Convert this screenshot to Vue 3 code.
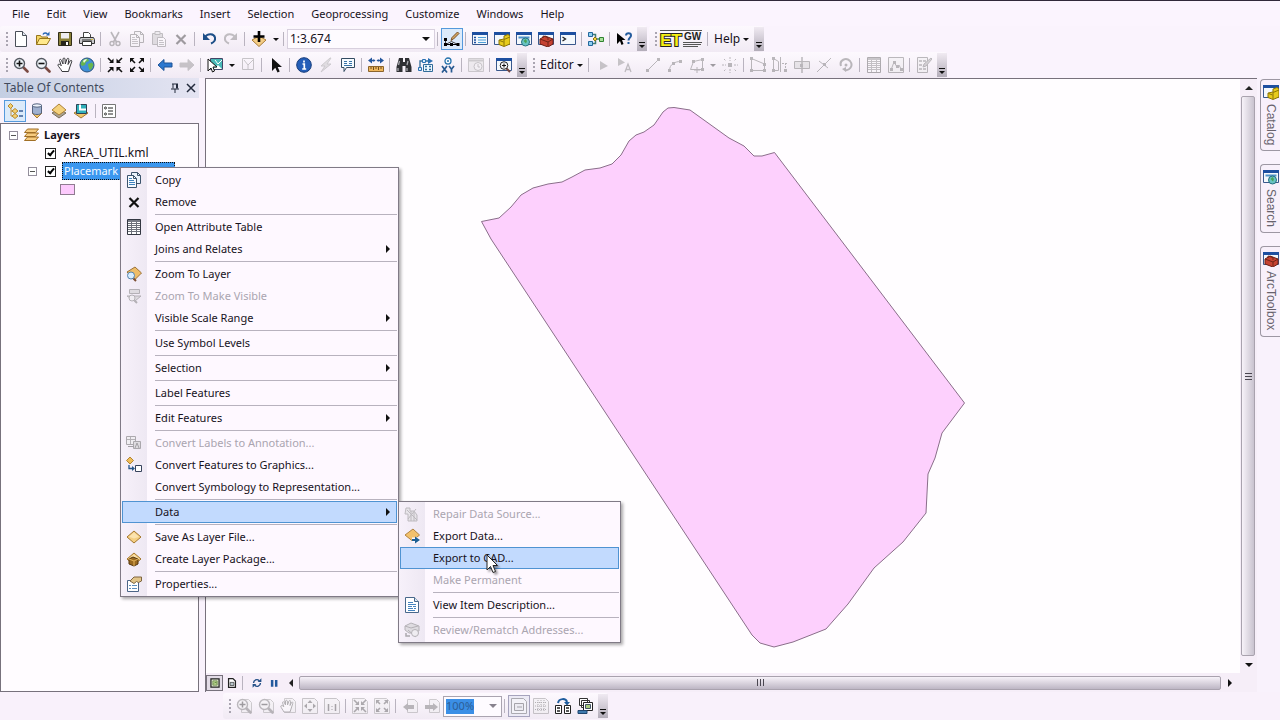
<script setup>
import { ref } from 'vue'

const page = '<path d="M2.500.5h7l4 4v11h-11z" fill="#fff" stroke="#4a4f58"/><path d="M9.500.5v4h4" fill="#dfe6ee" stroke="#4a4f58"/>'
const win = '<path d="M.5 1.500h15v12H.5z" fill="#f4f8fc" stroke="#39588c"/><path d="M0 1h16v3H0z" fill="#1d4fa0"/>'
const lens = '<path d="M10 10l4.500 4.500" stroke="#7b4a42" stroke-width="2.600" stroke-linecap="round"/><circle cx="6.500" cy="6.500" r="5" fill="#eef3f8" stroke="#555a62" stroke-width="1.400"/>'
const diamond = '<path d="M8 2l7 6-7 6-7-6z" fill="#f4cf83" stroke="#a5772e"/><path d="M8 3.500l5 4.300-5 1.700-5-1.700z" fill="#fbe3ae"/>'
const pageLens = '<path d="M5.500 1.500h7l3 3v10h-10z" fill="#eee" stroke="#888"/>'
const nodes = (pts) => pts.map(([x, y]) => `<path d="M${x - 1} ${y - 1}h3v3h-3z" fill="#555"/>`).join('')

const icons = {
  new: page,
  open: '<path d="M1.500 13.500v-9h4l1 1.500h6v2" fill="#f5d565" stroke="#96751c"/><path d="M1.500 13.500l3-6h11l-3.500 6z" fill="#ffe98c" stroke="#96751c"/><path d="M8 3.500c1-2 3-2 4.500-.5" fill="none" stroke="#2767b5" stroke-width="1.500"/><path d="M11 4.500h3.500v-4z" fill="#2767b5"/>',
  save: '<path d="M1.500 1.500h13v13h-13z" fill="#8a8038" stroke="#302d18"/><path d="M4 2h8v5.500H4z" fill="#efeef2"/><path d="M4 10h8v4.500H4z" fill="#25241c"/><path d="M9 11h2v3H9z" fill="#fff"/>',
  print: '<path d="M4.500 7V1.500h5l2 2V7" fill="#fff" stroke="#444"/><path d="M1.500 6.500h13l1 2v4h-15v-4z" fill="#c9c9cc" stroke="#333"/><path d="M3 9h10" stroke="#333"/><path d="M3.500 10.500h9v4h-9z" fill="#fff" stroke="#333"/><path d="M12 8h2v1h-2z" fill="#d4bd3a"/>',
  cut: '<path d="M4 1l5.500 10M12 1L6.500 11" stroke="#555" stroke-width="1.600"/><circle cx="5" cy="12.500" r="2" fill="none" stroke="#555" stroke-width="1.400"/><circle cx="11" cy="12.500" r="2" fill="none" stroke="#555" stroke-width="1.400"/>',
  copy: '<path d="M5.500.5h6l3 3v8h-9z" fill="#eaf2fb" stroke="#3c536c"/><path d="M1.500 3.500h6l3 3v9h-9z" fill="#f6faff" stroke="#3c536c"/><path d="M7.500 3.500v3h3M11.500.5v3h3" fill="none" stroke="#3c536c"/><path d="M3 8.500h5M3 10.500h6M3 12.500h6M3 6.500h3" stroke="#3f83bd"/>',
  paste: '<path d="M1.500 2.500h10v11h-10z" fill="#bbb" stroke="#666"/><path d="M4 .5h5v3H4z" fill="#ddd" stroke="#666"/><path d="M6.500 6.500h6l2 2v7h-8z" fill="#fff" stroke="#666"/><path d="M8 9.500h4M8 11.500h5M8 13.500h5" stroke="#777"/>',
  x: '<path d="M3.500 4l9 9M12.500 4l-9 9" stroke="#111" stroke-width="2.200"/>',
  undo: '<path d="M4 6c3-4 9-3.500 10 .5.500 3-1.500 5-4 6" fill="none" stroke="#1d4f88" stroke-width="2"/><path d="M2 2v7h7z" fill="#1d4f88"/>',
  redo: '<path d="M12 6C9 2 3 2.500 2 6.500c-.5 3 1.500 5 4 6" fill="none" stroke="#666" stroke-width="2"/><path d="M14 2v7H7z" fill="#666"/>',
  add: '<path d="M1 9l7-4 7 4-7 6.500z" fill="#f4cd85" stroke="#a87b36"/><path d="M8 0v11M2.500 5.500h11" stroke="#000" stroke-width="2.600"/>',
  edit: '<path d="M1.500 8v5.500l6-3 6.500 3" fill="none" stroke="#444"/><path d="M0 12h3v3H0zM6 12h3v3H6zM12.500 12h3v3h-3zM0 7h3v3H0z" fill="#000"/><path d="M1 13.500h13" stroke="#000"/><path d="M7 9.500l1-3L13.500 1 15 2.500 9.500 8z" fill="#d6a75f" stroke="#76502b"/>',
  toc: win + '<path d="M2 6.500h2M2 9h2M2 11.500h2" stroke="#1d4fa0" stroke-width="1.500"/><path d="M6 6.500h8M6 9h8M6 11.500h8" stroke="#4fa0d8"/>',
  catalog: win + '<path d="M5 9l5-1V5l4-1.500L16 5v8l-6 2.500-5-2z" fill="#e7cb1c" stroke="#8c7507"/><path d="M10 15V8.500L16 6M5.500 9.500l4 1.500" fill="none" stroke="#8c7507"/>',
  search: win + '<path d="M2.500 6.500h11" stroke="#4e92c8" stroke-width="2"/><circle cx="9.500" cy="11" r="4" fill="#68c3c4" stroke="#276f80"/><path d="M7.500 10l2-2 1.500 2-1 2.500z" fill="#49a357"/>',
  toolbox: win + '<path d="M2 8l5-3 8 3v5l-5 3-8-3z" fill="#c64231" stroke="#6e2018"/><path d="M2 8l8 3 5-3M10 11v4M5 7V5l5 1.500V9" fill="none" stroke="#712317"/>',
  python: win + '<path d="M2.500 6l3 2-3 2" fill="none" stroke="#222" stroke-width="1.300"/>',
  model: '<path d="M5 3.500h2.500v9H5M8 8h3" fill="none" stroke="#3f7d75" stroke-width="1.500"/><path d="M.5 1.500h4v4h-4zM.5 10.500h4v4h-4z" fill="#8fd0ef" stroke="#23679c"/><path d="M7 6l2 2-2 2-2-2z" fill="#f2d33f" stroke="#8f7711"/><path d="M11.500 6.500h4v4h-4z" fill="#a9e09b" stroke="#2f8230"/>',
  whats: '<path d="M1 2v11l3-3 1.500 4 2-1L6 9h3.500z" fill="#000"/><path d="M10 4.500c.2-3 5-3 5 0 0 2-2.500 2.500-2.500 5" fill="none" stroke="#245c9d" stroke-width="2"/><path d="M11.500 11h2v2h-2z" fill="#245c9d"/>',
  zin: lens + '<path d="M3.500 6.500h6M6.500 3.500v6" stroke="#111" stroke-width="1.600"/>',
  zout: lens + '<path d="M3.500 6.500h6" stroke="#111" stroke-width="1.600"/>',
  hand: '<path d="M5 14.500C4 12 1.500 10 .8 8c.6-1.500 2-1 3.500.8L2.500 3.500C2.600 2 4 2 4.500 3.500L6 7V2c.4-1.500 1.700-1.400 2 0l.3 5L10 2c.6-1.300 2-.8 1.800.5L11 7.500l2.200-3.700c1-1 2-.2 1.500 1L12.500 11l-1 3.500z" fill="#fff" stroke="#3a3a3e"/>',
  globe: '<circle cx="8" cy="8" r="7" fill="#3f8fd6" stroke="#29517f"/><path d="M3 4c2-2 4-2.500 6-2l1 2-3 1-1 3-3 1-1.500-2zM9 7l4-1.500 1.500 2.500-2 4-2 1-1-3z" fill="#68b54c"/><path d="M4 4c1-1.500 3-2 4-1.500L5 6z" fill="#e9f8e1"/>',
  fin: '<path d="M1 1l4 4M15 1l-4 4M1 15l4-4M15 15l-4-4" stroke="#111" stroke-width="1.600"/><path d="M2 6h4.500V1.500zM14 6H9.500V1.500zM2 10h4.500v4.500zM14 10H9.500v4.500z" fill="#111"/>',
  fout: '<path d="M6 6L2 2M10 6l4-4M6 10l-4 4M10 10l4 4" stroke="#111" stroke-width="1.600"/><path d="M1 5.500V1h4.500zM15 5.500V1h-4.500zM1 10.500V15h4.500zM15 10.500V15h-4.500z" fill="#111"/>',
  back: '<path d="M1 8l6-5.500V6h8v4H7v3.500z" fill="#2d78cf" stroke="#1e5597"/>',
  fwd: '<path d="M15 8L9 2.500V6H1v4h8v3.500z" fill="#777" stroke="#777"/>',
  select: '<path d="M3.500 1.500h12v11h-12z" fill="#fff" stroke="#446"/><path d="M4 2h11v10l-4-4-3 3-4-2z" fill="#48b8b6"/><path d="M8 3l3 4 4-4" fill="none" stroke="#fff"/><path d="M1 2v12l3-3 1.500 4 2-1L6 10h4z" fill="#fff" stroke="#111"/>',
  clear: '<path d="M2.500 1.500h11v11h-11zM4 3l4 5 5-5M8 8v4" fill="none" stroke="#777"/>',
  pointer: '<path d="M4 1v13l3.300-3.200L9.500 15.500l2.200-1-2-4.500h4.300z" fill="#111"/>',
  info: '<circle cx="8" cy="8" r="7.300" fill="#245eb8" stroke="#173d7b"/><path d="M8 3.500v2M6.500 7h1.800v5M6.200 12h4" stroke="#fff" stroke-width="1.700" fill="none"/>',
  bolt: '<path d="M12 1L3 9h4l-4 6 10-8H9l4-6z" fill="#bbb" stroke="#888"/>',
  popup: '<path d="M1.500 1.500h13v9h-8l-2.500 4v-4H1.500z" fill="#f6fbff" stroke="#334c62"/><path d="M4 4.500h3M4 6.500h3M4 8.500h8M9 4.500h3M9 6.500h3" stroke="#3773a7"/>',
  measure: '<path d="M3 3.500h3M10 3.500h3" stroke="#24569c" stroke-width="1.300"/><path d="M0 3.500l4-3v6zM16 3.500l-4-3v6zM8.500 3.500l2-1.500v3zM7.500 3.500l-2-1.500v3z" fill="#24569c"/><path d="M.5 9.500h15v5H.5z" fill="#efb75c" stroke="#8b642c"/><path d="M3 10v2M5.500 10v3M8 10v2M10.500 10v3M13 10v2" stroke="#704b1c"/>',
  binoc: '<path d="M3 1h4v4h2V1h4l2.500 9v5H9.500V9h-3v6H.5v-5z" fill="#2f3034"/><path d="M2.500 8l1-4M11 8l1-4M2 11v3M11 11v3" stroke="#a9a9af" stroke-width="1.300"/>',
  route: '<path d="M5.500 7.500h9v7h-9z" fill="#edf7ff" stroke="#316c99"/><path d="M2 13V4h3M7 9.500h2M11 9.500h2M7 12.500h2M11 12.500h2M7 4h3" fill="none" stroke="#316c99" stroke-width="1.300"/><path d="M10 1l5 3-5 3z" fill="#2a70b2"/><path d="M.5 10.500h3v3h-3zM4.500 2.500h3v3h-3z" fill="#d5ecfa" stroke="#2a70b2"/>',
  xy: '<circle cx="8" cy="4" r="3" fill="#fff" stroke="#2773ad" stroke-width="1.300"/><circle cx="8" cy="4" r="1" fill="#2773ad"/><path d="M2 9l5 6.500M7 9l-5 6.500M9 9l2.500 3.200L14 9M11.500 12v3.500" fill="none" stroke="#285a91" stroke-width="1.700"/>',
  clock: '<path d="M.5 1.500h15v13H.5z" fill="#ddd" stroke="#888"/><path d="M1 3.500h14" stroke="#888" stroke-width="2"/><circle cx="10" cy="9.500" r="4" fill="#eee" stroke="#777"/><path d="M10 7v3h2" fill="none" stroke="#777"/>',
  viewer: win + '<path d="M10 11l4 4" stroke="#73463f" stroke-width="2"/><circle cx="8" cy="8.500" r="3.800" fill="#f4f4f7" stroke="#222"/><path d="M6 8.500h4M8 6.500v4" stroke="#111"/>',
  eptr: '<path d="M5 4l8 5-8 4z" fill="#777"/>',
  eptra: '<path d="M1 1l7 4.500L1 9z" fill="#777"/><path d="M8 15l3-8 3 8M9 12.500h4" fill="none" stroke="#666" stroke-width="1.300"/>',
  line: '<path d="M2.500 13.500l11-11" stroke="#555"/>' + nodes([[2, 13], [13, 2]]),
  arc: '<path d="M2.500 13.500c0-6 5-9 11-9" fill="none" stroke="#555"/>' + nodes([[2, 13], [6, 6], [13, 4]]),
  poly: '<path d="M1.500 12.500l3-8 9-2v10z" fill="none" stroke="#555"/><path d="M8 10v6M5 13h6" stroke="#555"/>' + nodes([[4, 4], [13, 2], [13, 12]]),
  point: '<path d="M8 0v4M8 12v4M0 8h4M12 8h4M2 2l2 2M14 2l-2 2M2 14l2-2M14 14l-2-2" stroke="#555" stroke-dasharray="2 1"/><path d="M6 6h4v4H6z" fill="#555"/>',
  vertices: '<path d="M1.500 1.500v12h13V7l-13-5.500M14.500 1v13" fill="none" stroke="#555"/>' + nodes([[1, 1], [1, 13], [14, 13], [14, 7]]),
  reshape: '<path d="M1.500 1.500v12h5v-9l-5-3M8.500 0v15" fill="none" stroke="#555"/><path d="M13.500 6v9M10 6.500h5" stroke="#555" stroke-dasharray="2 1"/>' + nodes([[1, 1], [1, 13], [13, 13]]),
  cutpoly: '<path d="M.5 4.500h15v7H.5z" fill="#ccc" stroke="#555"/><path d="M8 0v16" stroke="#555" stroke-width="1.500"/>' + nodes([[7, 8]]),
  split: '<path d="M1 15L15 1M3 4l9 7" stroke="#555"/>' + nodes([[8, 7]]),
  rotate: '<path d="M3 9C1 3 8 0 12 4c4 5-1 10-5 9" fill="none" stroke="#555" stroke-width="2"/><path d="M8 15l-4-3 4-2z" fill="#555"/><circle cx="8" cy="8" r="1.500" fill="#555"/>',
  table: '<path d="M1.500.5h13v15h-13z" fill="#fff" stroke="#333741"/><path d="M2 4.500h12M2 6.500h12M2 8.500h12M2 10.500h12M2 12.500h12M5.500 3v12M10.500 3v12" stroke="#6c7079"/><path d="M2 1h12v2H2z" fill="#777b85"/>',
  sketch: '<path d="M.5.5h15v15H.5z" fill="#eee" stroke="#555"/><path d="M3 13l3-8 3 5 2-2 2 4" fill="none" stroke="#555"/>' + nodes([[3, 12], [6, 5], [9, 9], [13, 12]]),
  create: '<path d="M1.500.5h10v15h-10z" fill="#eee" stroke="#555"/><path d="M3 4h3M7 4h3M3 8h3M3 12h3M7 12h3" stroke="#555" stroke-width="1.500"/><path d="M7 10l1-3 7-6 1 1-6 7z" fill="#999" stroke="#555"/>',
  order: '<path d="M4 5v8h5M4 8h5" fill="none" stroke="#c8963a"/><path d="M1 3l2.500-2.500L6 3 3.500 5.500zM5 8l3-2.500L11 8l-3 2.500zM5 13l3-2.500 3 2.500-3 2.500z" fill="#f3d06f" stroke="#b58a31"/><path d="M12 8h4M12 13h4" stroke="#3c5f96" stroke-width="1.300"/>',
  source: '<path d="M3 10l5-2 5 2-5 5z" fill="#f0c56d" stroke="#a97c35"/><path d="M3.500 2v8c1 2 8 2 9 0V2z" fill="#9fb0cf" stroke="#54627e"/><ellipse cx="8" cy="2.500" rx="4.500" ry="1.700" fill="#eef3fb" stroke="#54627e"/>',
  visible: '<path d="M1 10l7-4 7 4-7 5z" fill="#aaa191" stroke="#776c59"/><path d="M1 7l7-6 7 6-7 5z" fill="#f5d17c" stroke="#ac8137"/>',
  selection: '<path d="M1 10l7-4 7 4-7 5z" fill="#f0c66c" stroke="#a47c35"/><path d="M3.500 1.500h10v9h-10z" fill="#30b0bb" stroke="#2f4356"/><path d="M7 1.500v5h6" fill="none" stroke="#fff" stroke-width="2"/>',
  options: '<path d="M1.500 1.500h13v13h-13z" fill="#fff" stroke="#777"/><path d="M7 5h5M7 11h5M7 8h5" stroke="#222"/><circle cx="4.500" cy="5" r="1" fill="none" stroke="#333"/><circle cx="4.500" cy="11" r="1" fill="none" stroke="#333"/>',
  layers: '<path d="M1.500 13.500l3-3.500h11l-3 3.500zM1.500 9.500l3-3.500h11l-3 3.500zM1.500 5.500l3-3.500h11l-3 3.500z" fill="#f7cc80" stroke="#a16f26"/>',
  zlayer: '<path d="M1 6l8-5 6.500 6-7 7z" fill="#eebd68" stroke="#9c7238"/><path d="M7 12l3 3" stroke="#7c4f33" stroke-width="2"/><circle cx="5" cy="9.500" r="3.500" fill="#d8edff" stroke="#5483ac"/>',
  zvis: '<path d="M3.500 1.500h10v4h-10zM1 8h14l-6 5z" fill="#ccc" stroke="#777"/><path d="M8 12l3 3" stroke="#777" stroke-width="2"/><circle cx="6" cy="10" r="3" fill="#eee" stroke="#777"/>',
  annot: '<path d="M.5 1.500h9v8h-9z" fill="#eee" stroke="#666"/><path d="M1 4.500h8M4.500 2v7" stroke="#777"/><path d="M7.500 6.500h7v7h-7z" fill="#ccc" stroke="#666"/><path d="M2 11.500h6M9 13l2-5 2 5" fill="none" stroke="#555"/>',
  graphics: '<path d="M4 0l3.500 3.500L4 7 .5 3.500z" fill="#efbd58" stroke="#b38635"/><path d="M3 8v3.500h4" fill="none" stroke="#24568a" stroke-width="1.300"/><path d="M6 9l3 2.500L6 14z" fill="#24568a"/><path d="M9.500 8.500h6v6h-6z" fill="#fff" stroke="#37435c"/>',
  diamond,
  package: diamond + '<path d="M3 8l4-2 5 2v5l-4 2-5-2z" fill="#9a6a20" stroke="#54370e"/><path d="M3 8l5 2 4-2M8 10v5" fill="none" stroke="#e4b35a"/>',
  props: '<path d="M1.500 4.500h11v11h-11z" fill="#fff" stroke="#4c6587"/><path d="M3 9.500h2M6 9.500h5M3 12.500h2M6 12.500h5" stroke="#5c8dbf"/><path d="M4 5l4-4h7.500v4l-3 1.500-2-1L8 7.500z" fill="#e2c58a" stroke="#7e6540"/>',
  repair: '<path d="M2 2h4v3h4l3 4v6H4V8H1z" fill="#ddd" stroke="#888"/><path d="M3 4l10 10M12 3l-8 10M7 5v10M10 6v9" stroke="#888"/>',
  exportd: '<path d="M1 7l8-6 6.500 6-7 6z" fill="#f3c16b" stroke="#b28441"/><path d="M8 9.500h8v5H8z" fill="#fdf8ff"/><path d="M8 12h4" stroke="#1e5f93" stroke-width="2"/><path d="M11 8.500l5 3.500-5 3.500z" fill="#1e5f93"/>',
  desc: '<path d="M1.500.5h9l4 4v11h-13z" fill="#fff" stroke="#48688b"/><path d="M10.500.5v4h4" fill="#dbe8f3" stroke="#48688b"/><path d="M4 5.500h5M4 7.500h8M4 9.500h4M9 9.500h3M4 11.500h5M10 11.500h2M4 13.500h7" stroke="#4584c0"/>',
  rematch: '<path d="M1 4l6-3 8 3v5l-5 2H5L1 8z" fill="#ccc" stroke="#777"/><path d="M1 4l6 2 7-2M4 8l8 7" fill="none" stroke="#777"/><circle cx="11" cy="11" r="3.500" fill="#eee" stroke="#777"/><path d="M2 11v3h4" fill="none" stroke="#666" stroke-width="1.500"/>',
  dview: '<path d="M1.500 1.500h13v13h-13z" fill="#eaf0da" stroke="#222" stroke-width="2"/><path d="M4.500 4.500h7v7h-7z" fill="#b7d58d" stroke="#47682c"/><path d="M6 9l2-2 3 1" fill="none" stroke="#47682c"/>',
  lview: '<path d="M2.500 1h7l4 4v10h-11z" fill="#fff" stroke="#222" stroke-width="2"/><path d="M5 7h6v5H5z" fill="#b9c6cc" stroke="#222"/>',
  refresh: '<path d="M2.500 8c0-5 6-7 9-3.500M13.500 8c0 5-6 7-9 3.500" fill="none" stroke="#245087" stroke-width="2.200"/><path d="M9 6.500h6V.5zM7 9.500H1v6z" fill="#245087"/>',
  pause: '<path d="M3 3h4v11H3zM9.500 3h4v11h-4z" fill="#225a9d"/>',
  pzin: pageLens + lens + '<path d="M3.500 6.500h6M6.500 3.500v6" stroke="#111" stroke-width="1.500"/>',
  pzout: pageLens + lens + '<path d="M3.500 6.500h6" stroke="#111" stroke-width="1.500"/>',
  phand: '<path d="M4.500.5h8l3 3v11h-11z" fill="#eee" stroke="#888"/><path d="M4 14C3 12 1 10 .8 8c.6-1 2-.5 3 .8L2.500 4.500c.2-1 1.300-1 1.800 0L5.500 7V3c.4-1 1.500-1 1.800 0l.2 4L9 3c.6-1 1.700-.6 1.600.5L10 7.500l1.500-3c.8-.8 1.700-.2 1.300.8L11 11l-1 3z" fill="#fff" stroke="#444"/>',
  whole: '<path d="M.5.5h12l3 3v12H.5z" fill="#eee" stroke="#777"/><path d="M8 2l2.500 3h-5zM8 14l2.500-3h-5zM2 8l3-2.500v5zM14 8l-3-2.500v5z" fill="#333"/>',
  one: '<path d="M.5.5h12l3 3v12H.5z" fill="#eee" stroke="#777"/><path d="M4.500 6v7M11.500 6v7" stroke="#222" stroke-width="1.500"/><path d="M7.500 8h1v1h-1zM7.500 11h1v1h-1z" fill="#222"/>',
  pfin: '<path d="M.5.5h12l3 3v12H.5z" fill="#eee" stroke="#888"/><path d="M2 2l4 4M14 2l-4 4M2 14l4-4M14 14l-4-4" stroke="#333" stroke-width="1.600"/><path d="M3 7h4V3zM13 7H9V3zM3 9h4v4zM13 9H9v4z" fill="#333"/>',
  pfout: '<path d="M.5.5h12l3 3v12H.5z" fill="#eee" stroke="#888"/><path d="M6 6L3 3M10 6l3-3M6 10l-3 3M10 10l3 3" stroke="#333" stroke-width="1.600"/><path d="M2 6V2h4zM14 6V2h-4zM2 10v4h4zM14 10v4h-4z" fill="#333"/>',
  pback: pageLens + '<path d="M1 9l5-4v2h6v4H6v2z" fill="#555"/>',
  pfwd: pageLens + '<path d="M14 9L9 5v2H1v4h8v2z" fill="#555"/>',
  draft: '<path d="M.5.5h12l3 3v12H.5z" fill="#fff" stroke="#444"/><path d="M3.500 5.500h9v7h-9z" fill="#eee" stroke="#333"/><path d="M6 9h5" stroke="#333"/>',
  focus: '<path d="M.5.5h12l3 3v12H.5z" fill="#eee" stroke="#777"/><path d="M2 4.500h11M2 8h12M2 11.500h12M5 2v12M8 2v12M11 2v12" stroke="#444" stroke-dasharray="1 1"/>',
  change: '<path d="M.5 7.500h6v8h-6zM9.500 7.500h6v8h-6z" fill="#fff" stroke="#222"/><path d="M2 10h3M2 13h3M11 10h3M11 13h3" stroke="#222" stroke-width="1.500"/><path d="M3 5c1-5 8-5 9-1" fill="none" stroke="#1f5d9e" stroke-width="2"/><path d="M9 4h6l-3 3.500z" fill="#1f5d9e"/>',
  driven: '<path d="M2.500.5h8v7h-8zM4.500 2.500h8v7h-8z" fill="#fff" stroke="#333"/><path d="M6.500 4.500h9v8h-9z" fill="#fff" stroke="#222"/><path d="M8.500 6.500h5v4h-5z" fill="#a8cc7c" stroke="#456"/><path d="M1 12.500h9v3H1z" fill="#3e7bae" stroke="#1f456e"/>'
}

const menuBar = ['File', 'Edit', 'View', 'Bookmarks', 'Insert', 'Selection', 'Geoprocessing', 'Customize', 'Windows', 'Help']

// Toolbar shorthand: "|" separator, "~" gap, "v" drop arrow, "!name" unavailable, "*name" pressed, "#name" pressed and unavailable.
const parse = (text) => text.split(' ').map((t) => {
  if (t === '|') return { kind: 'sep' }
  if (t === '~') return { kind: 'gap' }
  if (t === 'v') return { kind: 'drop' }
  return { kind: 'btn', icon: t.replace(/[!*#]/, ''), off: t[0] === '!' || t[0] === '#', on: t[0] === '*', held: t[0] === '#' }
})
const standardA = parse('new open save print | !cut !copy !paste !x | undo !redo | add v |')
const standardB = parse('| *edit | toc catalog search toolbox python | model | whats')
const tools = parse('zin zout hand globe | fin fout | back !fwd | select v !clear | pointer | info !bolt popup | measure | binoc route xy | !clock | viewer')
const editor = parse('| !eptr !eptra ~ !line !arc !poly v !point | !vertices !reshape !cutpoly !split !rotate | !table !sketch | !create')
const layoutA = parse('!pzin !pzout !phand !whole !one | !pfin !pfout | !pback !pfwd')
const layoutB = parse('| #draft !focus change driven')

const sep = { sep: true }
const contextMenu = [
  { t: 'Copy', icon: 'copy' }, { t: 'Remove', icon: 'x' }, sep,
  { t: 'Open Attribute Table', icon: 'table' }, { t: 'Joins and Relates', sub: true }, sep,
  { t: 'Zoom To Layer', icon: 'zlayer' }, { t: 'Zoom To Make Visible', icon: 'zvis', off: true },
  { t: 'Visible Scale Range', sub: true }, sep,
  { t: 'Use Symbol Levels' }, sep, { t: 'Selection', sub: true }, sep,
  { t: 'Label Features' }, sep, { t: 'Edit Features', sub: true }, sep,
  { t: 'Convert Labels to Annotation...', icon: 'annot', off: true },
  { t: 'Convert Features to Graphics...', icon: 'graphics' },
  { t: 'Convert Symbology to Representation...' }, sep,
  { t: 'Data', sub: true, hot: true }, sep,
  { t: 'Save As Layer File...', icon: 'diamond' }, { t: 'Create Layer Package...', icon: 'package' }, sep,
  { t: 'Properties...', icon: 'props' }
]
const dataMenu = [
  { t: 'Repair Data Source...', icon: 'repair', off: true }, { t: 'Export Data...', icon: 'exportd' },
  { t: 'Export to CAD...', hot: true }, { t: 'Make Permanent', off: true }, sep,
  { t: 'View Item Description...', icon: 'desc' }, sep,
  { t: 'Review/Rematch Addresses...', icon: 'rematch', off: true }
]
const menus = [{ cls: 'layer-menu', label: 'Layer', items: contextMenu }, { cls: 'data-menu', label: 'Data', items: dataMenu }]
const docks = [{ t: 'Catalog', icon: 'catalog' }, { t: 'Search', icon: 'search' }, { t: 'ArcToolbox', icon: 'toolbox' }]
const tocModes = ['order', 'source', 'visible', 'selection']

const scale = ref('1:3.674')
const zoom = ref('100%')
const areaOn = ref(true)
const placemarkOn = ref(true)
</script>

<template>
  <div class="app">
    <nav class="menubar">
      <button v-for="m in menuBar" :key="m">{{ m }}</button>
    </nav>

    <div class="row">
      <div class="bar">
        <i class="grip"></i>
        <template v-for="(b, i) in standardA" :key="i">
          <button v-if="b.kind === 'btn'" class="tb" :class="{ dim: b.off }" :disabled="b.off" :aria-label="b.icon"><svg viewBox="0 0 16 16" v-html="icons[b.icon]"></svg></button>
          <button v-else-if="b.kind === 'drop'" class="drop" aria-label="More"><i class="tri"></i></button>
          <i v-else :class="b.kind"></i>
        </template>
        <label class="combo scale">
          <select v-model="scale" aria-label="Map scale"><option>1:3.674</option><option>1:10.000</option></select>
          <i class="tri"></i>
        </label>
        <template v-for="(b, i) in standardB" :key="i">
          <button v-if="b.kind === 'btn'" class="tb" :class="{ on: b.on }" :aria-label="b.icon"><svg viewBox="0 0 16 16" v-html="icons[b.icon]"></svg></button>
          <i v-else :class="b.kind"></i>
        </template>
        <button class="more" aria-label="Toolbar options"><i class="dash"></i><i class="tri"></i></button>
      </div>
      <div class="bar et">
        <i class="grip"></i>
        <svg class="logo" viewBox="0 0 44 22" role="img" aria-label="ET GeoWizards">
          <path d="M1 2.500h42M24 14.500h19M24 16.500h18M24 18.500h15" stroke="#555" />
          <g font-weight="bold" paint-order="stroke">
            <text x="1" y="18" font-size="17" fill="#f7ee10" stroke="#222" stroke-width="2">ET</text>
            <text x="25" y="12" font-size="10" fill="#222">GW</text>
          </g>
        </svg>
        <i class="sep"></i>
        <button class="word">Help<i class="tri"></i></button>
        <button class="more" aria-label="Toolbar options"><i class="dash"></i><i class="tri"></i></button>
      </div>
    </div>

    <div class="row">
      <div class="bar">
        <i class="grip"></i>
        <template v-for="(b, i) in tools" :key="i">
          <button v-if="b.kind === 'btn'" class="tb" :class="{ dim: b.off }" :disabled="b.off" :aria-label="b.icon"><svg viewBox="0 0 16 16" v-html="icons[b.icon]"></svg></button>
          <button v-else-if="b.kind === 'drop'" class="drop" aria-label="More"><i class="tri"></i></button>
          <i v-else :class="b.kind"></i>
        </template>
        <button class="more" aria-label="Toolbar options"><i class="dash"></i><i class="tri"></i></button>
      </div>
      <div class="bar editor">
        <i class="grip"></i>
        <button class="word">Editor<i class="tri"></i></button>
        <template v-for="(b, i) in editor" :key="i">
          <button v-if="b.kind === 'btn'" class="tb" :class="{ dim: b.off }" :disabled="b.off" :aria-label="b.icon"><svg viewBox="0 0 16 16" v-html="icons[b.icon]"></svg></button>
          <button v-else-if="b.kind === 'drop'" class="drop dim" disabled aria-label="More"><i class="tri"></i></button>
          <i v-else :class="b.kind"></i>
        </template>
        <button class="more" aria-label="Toolbar options"><i class="dash"></i><i class="tri"></i></button>
      </div>
    </div>

    <main class="work">
      <aside class="toc">
        <header>
          <h2>Table Of Contents</h2>
          <button aria-label="Auto hide"><svg viewBox="0 0 10 10"><path d="M2 1h6M3 1v4.500M6.500 1v4.500M7.500 1v4.500M1 6h8M5 6v4" fill="none" stroke="#222a3c" /></svg></button>
          <button aria-label="Close"><svg viewBox="0 0 10 10"><path d="M1 1l8 8M9 1L1 9" stroke="#222a3c" stroke-width="1.500" /></svg></button>
        </header>
        <div class="toc-tools">
          <button v-for="(m, i) in tocModes" :key="m" class="tb" :class="{ on: i === 0 }" :aria-label="m"><svg viewBox="0 0 16 16" v-html="icons[m]"></svg></button>
          <i class="sep"></i>
          <button class="tb" aria-label="Options"><svg viewBox="0 0 16 16" v-html="icons.options"></svg></button>
        </div>
        <div class="tree">
          <div class="node root">
            <button class="twist" aria-label="Collapse"></button>
            <svg viewBox="0 0 16 16" v-html="icons.layers"></svg>
            <b>Layers</b>
          </div>
          <div class="node leaf">
            <span class="twist blank"></span>
            <input id="lyr-area" v-model="areaOn" type="checkbox"><label for="lyr-area">AREA_UTIL.kml</label>
          </div>
          <div class="node leaf">
            <button class="twist" aria-label="Collapse"></button>
            <input id="lyr-place" v-model="placemarkOn" type="checkbox"><label for="lyr-place" class="picked">Placemark</label>
          </div>
          <div class="node"><i class="swatch"></i></div>
        </div>
      </aside>

      <section class="view">
        <svg class="map" viewBox="206 80 1034 592" preserveAspectRatio="xMidYMid meet" role="img" aria-label="Map">
          <path d="M481.500 221.500L499 218 511 207 521 195 533 188 548 184 562 182 572 177 585 170 600 168 612 164 621 155 629 141 636 135 644 132 654 125 663 112 668 108 674 107.500 690 110 729 138 744 146 754 156 762 156 774.500 152.500 964.500 403 942 433 935 458 928 474 926 513 903 542 874 568 848 604 826 629 793 642 774 647 760 643 752 635 491 239z" fill="#fdd0fd" stroke="#8a6e8a" />
        </svg>
        <div class="vscroll">
          <button aria-label="Scroll up"><i class="tri up"></i></button>
          <div class="thumb"><i></i></div>
          <button aria-label="Scroll down"><i class="tri"></i></button>
        </div>
        <div class="hscroll">
          <button class="mini pressed" aria-label="Data view"><svg viewBox="0 0 16 16" v-html="icons.dview"></svg></button>
          <button class="mini" aria-label="Layout view"><svg viewBox="0 0 16 16" v-html="icons.lview"></svg></button>
          <i class="sep"></i>
          <button class="mini" aria-label="Refresh"><svg viewBox="0 0 16 16" v-html="icons.refresh"></svg></button>
          <button class="mini" aria-label="Pause"><svg viewBox="0 0 16 16" v-html="icons.pause"></svg></button>
          <button class="mini" aria-label="Scroll left"><i class="tri left"></i></button>
          <div class="thumb"><i></i></div>
          <button class="mini" aria-label="Scroll right"><i class="tri right"></i></button>
        </div>
      </section>

      <aside class="dock">
        <button v-for="d in docks" :key="d.t"><svg viewBox="0 0 16 16" v-html="icons[d.icon]"></svg><span>{{ d.t }}</span></button>
      </aside>
    </main>

    <footer class="row bottom">
      <div class="bar">
        <i class="grip"></i>
        <template v-for="(b, i) in layoutA" :key="i">
          <button v-if="b.kind === 'btn'" class="tb dim" disabled :aria-label="b.icon"><svg viewBox="0 0 16 16" v-html="icons[b.icon]"></svg></button>
          <i v-else :class="b.kind"></i>
        </template>
        <div class="combo pct"><input v-model="zoom" aria-label="Page zoom"><i class="tri"></i></div>
        <template v-for="(b, i) in layoutB" :key="i">
          <button v-if="b.kind === 'btn'" class="tb" :class="{ dim: b.off, held: b.held }" :disabled="b.off" :aria-label="b.icon"><svg viewBox="0 0 16 16" v-html="icons[b.icon]"></svg></button>
          <i v-else :class="b.kind"></i>
        </template>
        <button class="more" aria-label="Toolbar options"><i class="dash"></i><i class="tri"></i></button>
      </div>
    </footer>

    <div v-for="m in menus" :key="m.cls" class="menu" :class="m.cls" role="menu" :aria-label="m.label">
      <template v-for="(it, i) in m.items" :key="i">
        <hr v-if="it.sep">
        <button v-else role="menuitem" :class="{ hot: it.hot, off: it.off }" :disabled="it.off">
          <span class="ico"><svg v-if="it.icon" viewBox="0 0 16 16" v-html="icons[it.icon]"></svg></span>
          <span>{{ it.t }}</span>
          <i v-if="it.sub" class="tri right"></i>
        </button>
      </template>
    </div>

    <svg class="cursor" viewBox="0 0 12 20"><path d="M1 1v15l3.500-3.500L7 18.500l2.500-1L7 11.500h4.500z" fill="#fff" stroke="#222" /></svg>
  </div>
</template>

<style>
body { margin: 0; overflow: hidden; }
</style>

<style scoped>
.app { position: relative; display: flex; flex-direction: column; height: 100vh; box-sizing: border-box; border-top: 1px solid #30283a; background: #f9f2fc; color: #17121c; font: 11px/16px "Noto Sans", "Open Sans", sans-serif; overflow: hidden; }
button { font: inherit; color: inherit; background: none; border: 0; padding: 0; margin: 0; }
svg { display: block; width: 16px; height: 16px; flex: none; }
i { display: block; flex: none; }

.menubar { display: flex; gap: 1px; height: 25px; padding-left: 4px; background: #fbf4fe; }
.menubar button { padding: 0 8px; }
.row { display: flex; height: 26px; align-items: center; background: #faf3fd; }
.bar { display: flex; align-items: center; height: 26px; background: linear-gradient(#fdf9fe, #f1eaf4); border-radius: 3px; }
.grip { width: 3px; height: 15px; margin: 0 1px 0 6px; background: repeating-linear-gradient(#a9a4b0 0 2px, transparent 2px 4px); background-size: 2px 100%; background-repeat: no-repeat; }
.tb { display: flex; align-items: center; justify-content: center; box-sizing: border-box; width: 22px; height: 22px; flex: none; }
.dim svg, .dim .tri { filter: grayscale(1); opacity: .38; }
.on { border: 1px solid #5599dc; background: #dbeafa; }
.held { border: 1px solid #a6a3bd; background: #eceaf5; }
.sep { width: 1px; height: 14px; margin: 0 3px 0 2px; background: #b9b3bf; }
.gap { width: 6px; }
.drop { display: flex; justify-content: center; width: 11px; }
.tri { width: 0; height: 0; border: 4px solid transparent; border-top-color: #111; border-bottom-width: 0; }
.drop .tri, .word .tri, .more .tri { border-width: 3px 3px 0; }
.tri.up { border-width: 0 4px 4px; border-color: transparent transparent #222; }
.tri.left { border-width: 4px 4px 4px 0; border-color: transparent #222; }
.tri.right { border-width: 4px 0 4px 4px; border-color: transparent #111; }
.more { display: flex; flex-direction: column; align-items: center; justify-content: flex-end; gap: 2px; box-sizing: border-box; width: 10px; height: 24px; margin-left: 2px; padding-bottom: 3px; background: linear-gradient(#f0eaf2, #b3adb9); }
.dash { width: 6px; height: 1px; background: #111; }
.combo { display: flex; align-items: center; box-sizing: border-box; height: 20px; border: 1px solid #d8d0de; background: #fefbff; }
.combo select, .combo input { appearance: none; border: 0; outline: 0; padding: 0 2px; font: inherit; color: inherit; background: none; min-width: 0; }
.scale { width: 148px; padding-right: 4px; }
.scale select { flex: 1; font-size: 12px; }
.word { display: flex; align-items: center; gap: 3px; padding: 0 3px; font-size: 12px; }
.et { margin-left: 2px; }
.logo { width: 44px; height: 22px; font-family: "Liberation Sans", sans-serif; margin-right: 2px; }

.work { display: flex; flex: 1; min-height: 0; }
.toc { display: flex; flex-direction: column; width: 199px; flex: none; margin-right: 6px; }
.toc header { display: flex; align-items: center; gap: 6px; height: 20px; padding: 0 3px 0 4px; background: linear-gradient(90deg, #c4cfe3, #e4e4f2); }
.toc h2 { flex: 1; margin: 0; font-size: 12px; font-weight: normal; color: #414a5c; }
.toc header svg { width: 10px; height: 10px; }
.toc-tools { display: flex; align-items: center; height: 25px; padding-left: 4px; flex: none; }
.toc-tools .sep { margin: 0 2px 0 3px; }
.tree { flex: 1; border: 1px solid #77717c; background: #fffcff; padding: 2px 0 0 8px; overflow: hidden; font-size: 12px; }
.node { display: flex; align-items: center; height: 18px; white-space: nowrap; }
.root svg { margin: 0 5px 0 5px; }
.root b { font-size: 11px; }
.twist { position: relative; box-sizing: border-box; width: 9px; height: 9px; border: 1px solid #948e9c; background: linear-gradient(#555, #555) 1px 3px / 5px 1px no-repeat #fff; }
.twist.blank { visibility: hidden; }
.leaf { padding-left: 19px; }
.leaf input { appearance: none; box-sizing: border-box; width: 11px; height: 11px; margin: 0 6px 0 8px; border: 1px solid #222; background: #fff; }
.leaf input:checked::after { content: ""; display: block; width: 2px; height: 5px; margin: 0 0 0 3px; border: solid #000; border-width: 0 2px 2px 0; transform: rotate(40deg); }
.leaf label { padding: 0 1px; border: 1px dotted transparent; line-height: 16px; }
.leaf .picked { width: 109px; background: #3b97ef; color: #f4faff; border-color: #111; font-size: 11px; }
.swatch { width: 13px; height: 9px; margin-left: 51px; border: 1px solid #8f7b90; background: #fdcafd; }

.view { display: grid; grid-template: minmax(0, 1fr) 19px / minmax(0, 1fr) 17px; flex: 1; min-width: 0; border: 1px solid #77717c; border-width: 1px 0 0 1px; }
.map { width: 100%; height: 100%; background: #fffdff; }
.vscroll { display: flex; flex-direction: column; background: #f6eef8; }
.vscroll button { display: flex; align-items: center; justify-content: center; height: 17px; }
.thumb { display: flex; flex: 1; align-items: center; justify-content: center; box-sizing: border-box; border: 1px solid #a9a2ae; border-radius: 2px; }
.vscroll .thumb { margin: 0 2px 0 1px; background: linear-gradient(90deg, #f7f2f9, #c9c3cf); }
.vscroll .thumb i { width: 7px; height: 7px; background: repeating-linear-gradient(#4a4650 0 1px, transparent 1px 3px); }
.hscroll { grid-column: 1 / 3; display: flex; align-items: center; background: #f6eef8; padding-right: 19px; }
.hscroll .thumb { height: 14px; background: linear-gradient(#f7f2f9, #bdb6c4); }
.hscroll .thumb i { width: 7px; height: 7px; background: repeating-linear-gradient(90deg, #4a4650 0 1px, transparent 1px 3px); }
.mini { display: flex; align-items: center; justify-content: center; box-sizing: border-box; width: 17px; height: 16px; }
.mini svg { width: 10px; height: 10px; }
.hscroll .sep { margin: 0 5px 0 2px; }
.pressed { border: 1px solid #77717c; background: #e2dbe6; }

.dock { display: flex; flex-direction: column; gap: 13px; width: 20px; padding: 1px 0 0 3px; flex: none; }
.dock button { display: flex; flex-direction: column; align-items: center; gap: 4px; padding: 4px 0 5px; border: 1px solid #9d97a3; border-right: 0; border-radius: 4px 0 0 4px; background: #f8f0fb; color: #67626c; }
.dock span { writing-mode: vertical-rl; font: 12px/16px "Liberation Sans", sans-serif; }

.bottom { height: 28px; padding-left: 223px; background: #f9f1fb; flex: none; }
.pct { width: 59px; height: 21px; border-color: #aaa4b0; padding: 0 4px 0 2px; justify-content: space-between; }
.pct input { width: 28px; height: 15px; padding: 0; background: #3b8fe6; color: #2c5e96; }
.pct .tri { border-top-color: #88828e; }

.menu { position: absolute; box-sizing: border-box; border: 1px solid #807a86; padding: 1px; background: linear-gradient(90deg, #f7f1fa, #eee8f3) 0 0 / 26px 100% no-repeat #fef8ff; box-shadow: 2px 2px 3px #0005; }
.layer-menu { left: 120px; top: 166px; width: 279px; }
.data-menu { left: 398px; top: 500px; width: 223px; }
.menu button { display: flex; align-items: center; box-sizing: border-box; width: 100%; height: 22px; padding-right: 6px; text-align: left; border: 1px solid transparent; white-space: nowrap; }
.menu .ico { box-sizing: border-box; width: 32px; padding-left: 3px; flex: none; }
.menu .tri { margin-left: auto; }
.menu hr { height: 1px; margin: 1px 0 1px 33px; border: 0; background: #b8b2be; }
.menu .hot { background: #c2dafe; border-color: #4f93d2; }
.menu .off { color: #aaa5b0; }
.menu .off svg { filter: grayscale(1); opacity: .5; }
.cursor { position: absolute; left: 486px; top: 553px; width: 12px; height: 20px; filter: drop-shadow(2px 2px 1px #0006); }
</style>
